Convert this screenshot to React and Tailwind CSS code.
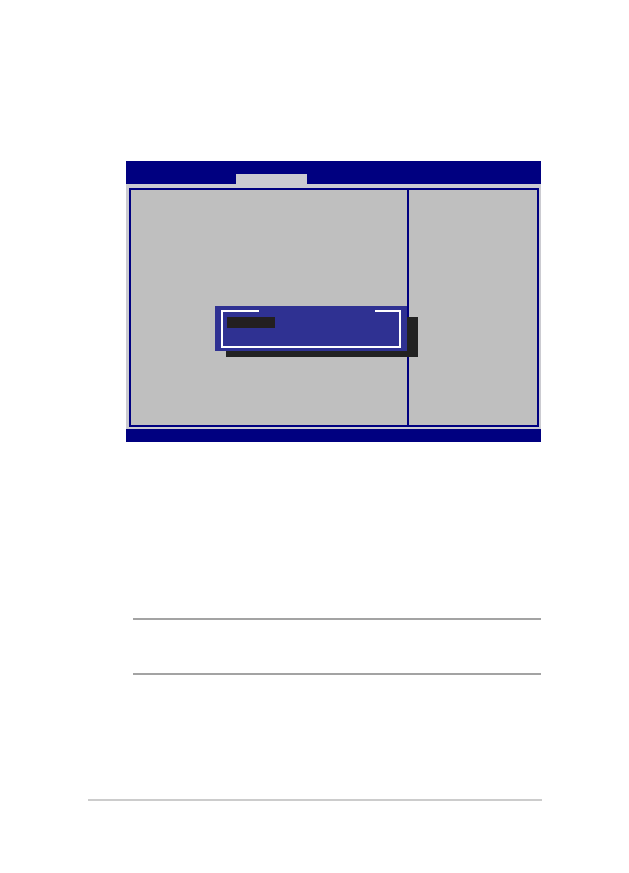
import React from 'react';

function BiosScreen() {
  return (
    <div className="ml-[126px] w-[415px]">
      <div className="h-[23px] bg-[#000080] flex items-end pl-[110px]">
        <div className="w-[71px] h-[10px] bg-[#cbcbd1]" />
      </div>
      <div className="bg-[#cbcbd1] pt-[4px] pb-[2px] pl-[3px] pr-[2px]">
        <div className="relative h-[239px] border-2 border-[#000080] bg-[#bfbfbf] flex">
          <div className="w-[278px] h-full border-r-2 border-[#000080]" />
          <div className="flex-1" />

          {/* popup */}
          <div className="absolute left-[95px] top-[127px] w-[192px] h-[40px] bg-[#222222]" />
          <div className="absolute left-[84px] top-[116px] w-[192px] h-[45px] bg-[#2f3192] px-[6px] pt-[4px] pb-[3px]">
            <div className="relative h-full border-x-2 border-b-2 border-white pt-[7px] pl-[4px]">
              <div className="absolute -left-[2px] top-0 w-[38px] h-[2px] bg-white" />
              <div className="absolute -right-[2px] top-0 w-[26px] h-[2px] bg-white" />
              <div className="w-[48px] h-[11px] bg-[#231f20]" />
            </div>
          </div>
        </div>
      </div>
      <div className="h-[13px] bg-[#000080]" />
    </div>
  );
}

export default function App() {
  return (
    <div className="w-[629px] h-[873px] bg-white relative overflow-hidden" style={{ fontFamily: '"Liberation Sans", Arial, sans-serif' }}>
      <div className="pt-[161px]">
        <BiosScreen />
      </div>
      <div className="ml-[133px] w-[408px] mt-[176px] h-[2px] bg-[#a3a3a3]" />
      <div className="ml-[133px] w-[408px] mt-[53px] h-[2px] bg-[#a3a3a3]" />
      <div className="ml-[88px] w-[454px] mt-[124px] h-[2px] bg-[#cccccc]" />
    </div>
  );
}
